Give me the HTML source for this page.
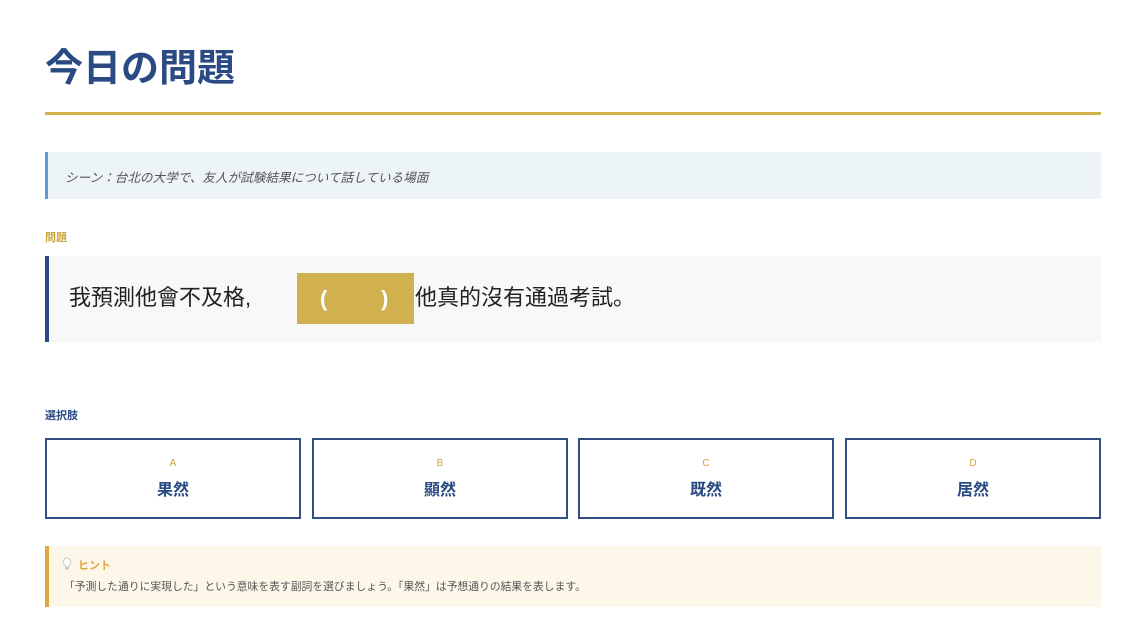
<!DOCTYPE html>
<html><head><meta charset="utf-8"><style>
*{margin:0;padding:0;box-sizing:border-box}
body{width:1146px;height:642px;background:#fff;font-family:"Liberation Sans","Noto Sans CJK JP",sans-serif;position:relative;overflow:hidden}
.a{position:absolute}
h1{position:absolute;left:45px;top:44px;font-size:38px;font-weight:700;color:#2a4a83;line-height:50px}
.line{left:45px;top:112px;width:1056px;height:3px;background:#d4b44a}
.scene{left:45px;top:152px;width:1056px;height:47px;background:#ecf4f7;border-left:3px solid #5a9bd5;font-size:12.6px;font-style:italic;color:#555;padding:15px 0 0 17px}
.lab{font-size:11px;font-weight:700;left:45px}
.q{left:45px;top:256px;width:1056px;height:86px;background:#f8f8f8;border-left:4px solid #2a4a83}
.qt{left:69px;top:283px;font-size:22px;color:#222;line-height:30px;white-space:nowrap}
.blank{left:297px;top:273px;width:117px;height:51px;background:#d1b04f;color:#fff;font-size:22px;font-weight:700;line-height:51px}
.opt{top:438px;width:256px;height:81px;border:2px solid #2f4f82;text-align:center}
.opt .l{font-size:10px;color:#c9a43a;margin-top:18px;line-height:12px}
.opt .w{font-size:16px;font-weight:700;color:#2a4a83;margin-top:6px}
.hint{left:45px;top:546px;width:1056px;height:61px;background:#fdf7e9;border-left:4px solid #e0a640}
</style></head><body>
<h1>今日の問題</h1>
<div class="a line"></div>
<div class="a scene">シーン：台北の大学で、友人が試験結果について話している場面</div>
<div class="a lab" style="top:229px;color:#c9a43a">問題</div>
<div class="a q"></div>
<div class="a qt">我預測他會不及格,</div>
<div class="a blank"><span style="position:absolute;left:23px">(</span><span style="position:absolute;left:84px">)</span></div>
<div class="a qt" style="left:415px">他真的沒有通過考試。</div>
<div class="a lab" style="top:407px;color:#2a4a83">選択肢</div>
<div class="a opt" style="left:45px"><div class="l">A</div><div class="w">果然</div></div>
<div class="a opt" style="left:312px"><div class="l">B</div><div class="w">顯然</div></div>
<div class="a opt" style="left:578px"><div class="l">C</div><div class="w">既然</div></div>
<div class="a opt" style="left:845px"><div class="l">D</div><div class="w">居然</div></div>
<div class="a hint"></div>
<svg class="a" style="left:62px;top:557px" width="10" height="14" viewBox="0 0 10 14"><path d="M5 1a4 4 0 0 0-2.5 7c.6.6 1 1.3 1 2h3c0-.7.4-1.4 1-2A4 4 0 0 0 5 1z" fill="#fff" stroke="#ccc" stroke-width="1"/><rect x="3.5" y="10.5" width="3" height="2" fill="#bbb"/></svg>
<div class="a" style="left:78px;top:557px;font-size:11px;font-weight:700;color:#e0a640">ヒント</div>
<div class="a" style="left:64px;top:578px;font-size:10.8px;color:#555;white-space:nowrap">「予測した通りに実現した」という意味を表す副詞を選びましょう。「果然」は予想通りの結果を表します。</div>
</body></html>
